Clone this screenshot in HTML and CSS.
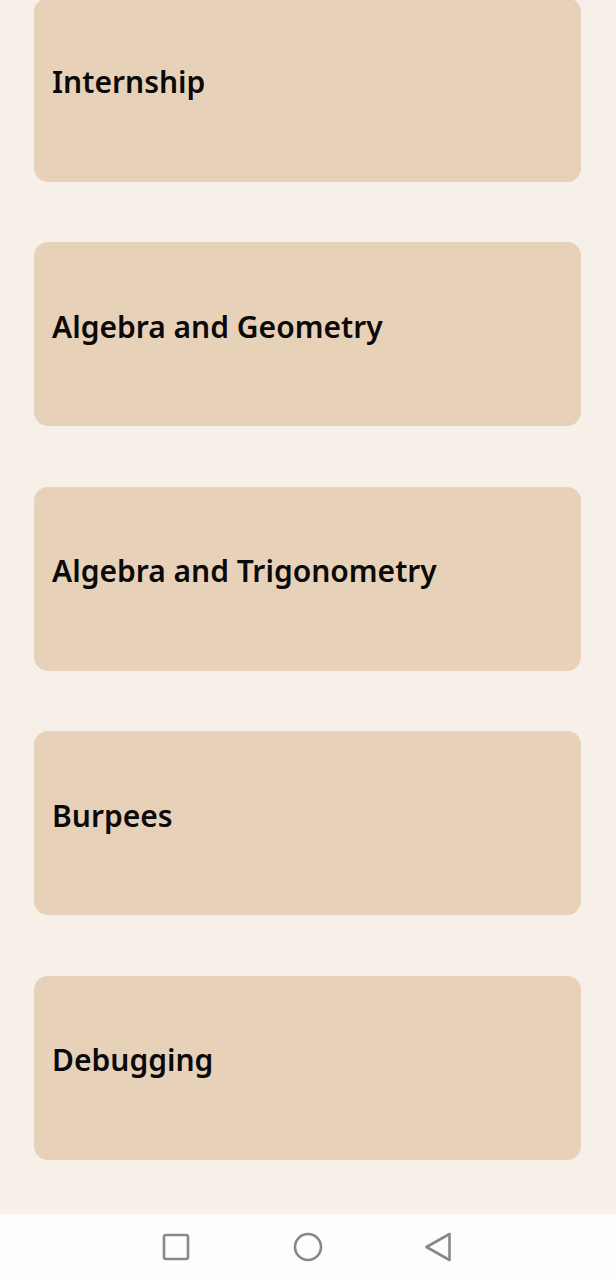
FILE: index.html
```html
<!DOCTYPE html>
<html>
<head>
<meta charset="utf-8">
<link rel="stylesheet" href="styles.css">
</head>
<body>
<div class="screen">
  <main class="list">
    <div class="card"><span class="title">Internship</span></div>
    <div class="card"><span class="title">Algebra and Geometry</span></div>
    <div class="card"><span class="title">Algebra and Trigonometry</span></div>
    <div class="card"><span class="title">Burpees</span></div>
    <div class="card"><span class="title">Debugging</span></div>
  </main>
  <nav class="navbar">
    <svg class="nav-icon nav-square" width="28" height="28" viewBox="0 0 28 28"><rect x="2" y="2" width="24" height="24" rx="2" fill="none" stroke="#888" stroke-width="2.6"/></svg>
    <svg class="nav-icon nav-circle" width="30" height="30" viewBox="0 0 30 30"><circle cx="15" cy="15" r="13" fill="none" stroke="#888" stroke-width="2.6"/></svg>
    <svg class="nav-icon nav-back" width="28" height="30" viewBox="0 0 28 30"><path d="M25.5 2 L25.5 28 L2.5 15 Z" fill="none" stroke="#888" stroke-width="2.6" stroke-linejoin="round"/></svg>
  </nav>
</div>
</body>
</html>
```

FILE: styles.css
```css
html, body {
  margin: 0;
  padding: 0;
}
body {
  background: #f7f0e9;
  font-family: "Noto Sans", sans-serif;
}
.screen {
  width: 616px;
  height: 1280px;
  overflow: hidden;
  display: flex;
  flex-direction: column;
}
.list {
  flex: 1;
  display: flex;
  flex-direction: column;
  gap: 60.5px;
  padding: 0 35px 0 34px;
  margin-top: -2.5px;
  overflow: hidden;
}
.card {
  flex: none;
  height: 184px;
  background: #e8d1b9;
  border-radius: 14px;
  display: flex;
  align-items: center;
  padding: 0 18px 16px;
  box-sizing: border-box;
}
.title {
  font-size: 30px;
  font-weight: 600;
  color: #0a0a0a;
}
.navbar {
  flex: none;
  height: 66px;
  background: #fdfdfd;
  display: flex;
  align-items: center;
  padding-left: 162px;
}
.nav-icon {
  display: block;
}
.nav-circle {
  margin-left: 103px;
}
.nav-back {
  margin-left: 101px;
}
```
